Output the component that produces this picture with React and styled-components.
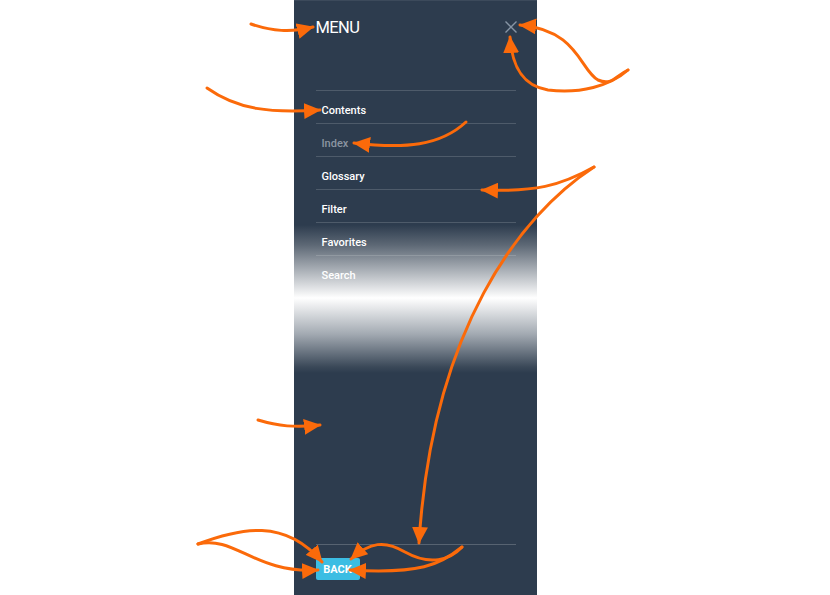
import styled, { createGlobalStyle } from 'styled-components'

const GlobalStyle = createGlobalStyle`
  html, body {
    margin: 0;
    padding: 0;
    background: #ffffff;
  }
  body {
    font-family: Roboto, "Open Sans", "Liberation Sans", sans-serif;
  }
`

const Page = styled.div`
  position: relative;
  width: 830px;
  height: 595px;
  overflow: hidden;
  display: flex;
  justify-content: center;
`

const Panel = styled.aside`
  width: 243px;
  height: 595px;
  box-sizing: border-box;
  padding: 0 21px 15px 22px;
  display: flex;
  flex-direction: column;
  border-top: 1px solid #3c4a5b;
  background: linear-gradient(
    to bottom,
    #2d3c4e 0,
    #2d3c4e 224px,
    #5d6875 244px,
    #ffffff 297px,
    #a3aab2 333px,
    #3a4858 366px,
    #2d3c4e 372px,
    #2d3c4e 100%
  );
`

const Header = styled.header`
  height: 89px;
  box-sizing: border-box;
  padding-top: 17px;
  display: flex;
  justify-content: space-between;
  align-items: flex-start;
`

const Title = styled.h1`
  margin: 0;
  font-size: 16.5px;
  line-height: 20px;
  font-weight: 400;
  color: #ffffff;
  letter-spacing: -0.6px;
`

const Close = styled.button`
  margin: 3px -1px 0 0;
  padding: 0;
  border: 0;
  background: none;
  width: 12px;
  height: 12px;
  display: flex;
`

const List = styled.ul`
  list-style: none;
  margin: 0;
  padding: 0;
`

const Item = styled.li`
  height: 33px;
  box-sizing: border-box;
  border-top: 1px solid rgba(255, 255, 255, 0.16);
  padding: 8px 0 0 6px;
  line-height: 24px;
  font-size: 11px;
  font-weight: 500;
  color: ${({ $dim }) => ($dim ? '#8b95a1' : '#ffffff')};
`

const Spacer = styled.div`
  flex: 1;
`

const Footer = styled.footer`
  border-top: 1px solid rgba(255, 255, 255, 0.2);
  padding-top: 13px;
`

const BackButton = styled.button`
  width: 44px;
  height: 22px;
  padding: 0;
  border: 0;
  border-radius: 2px;
  background: #3bbde3;
  color: #ffffff;
  font-family: Roboto, "Open Sans", "Liberation Sans", sans-serif;
  font-size: 11px;
  font-weight: 700;
`

const Overlay = styled.svg`
  position: absolute;
  left: 0;
  top: 0;
  pointer-events: none;
`

const items = [
  { label: 'Contents' },
  { label: 'Index', dim: true },
  { label: 'Glossary' },
  { label: 'Filter' },
  { label: 'Favorites' },
  { label: 'Search' },
]

// each path ends where its arrow tip sits
const arrows = [
  'M251,24 C272,31 290,33 313,27',
  'M207,88 C238,110 270,113 320,110',
  'M466,122 C440,146 405,149 354,143',
  'M594,167 C560,186 535,192 482,190',
  'M594,167 C520,215 432,330 419,543',
  'M258,420 C278,426 295,428 320,425',
  'M628,70 C615,76 612,86 598,80 C580,70 578,30 520,25',
  'M628,70 C610,86 580,94 548,90 C522,86 512,66 510,37',
  'M198,544 C240,528 285,518 322,562',
  'M198,544 C235,535 255,574 318,570',
  'M462,547 C450,560 430,566 405,552 C385,540 370,542 351,559',
  'M462,547 C440,565 420,574 350,570',
]

function Arrows() {
  return (
    <Overlay width="830" height="595" viewBox="0 0 830 595">
      <defs>
        <marker
          id="head"
          markerUnits="userSpaceOnUse"
          markerWidth="18"
          markerHeight="16"
          refX="16"
          refY="8"
          orient="auto"
        >
          <path d="M0,0 L17,8 L0,16 Z" fill="#fb6a0a" />
        </marker>
      </defs>
      {arrows.map((d, i) => (
        <path
          key={i}
          d={d}
          fill="none"
          stroke="#fb6a0a"
          strokeWidth="3"
          strokeLinecap="round"
          markerEnd="url(#head)"
        />
      ))}
    </Overlay>
  )
}

export default function App() {
  return (
    <Page>
      <GlobalStyle />
      <Panel>
        <Header>
          <Title>MENU</Title>
          <Close aria-label="Close">
            <svg width="12" height="12" viewBox="0 0 12 12">
              <path d="M0.5,0.5 L11.5,11.5 M11.5,0.5 L0.5,11.5" stroke="#8795a5" strokeWidth="1.4" />
            </svg>
          </Close>
        </Header>
        <List>
          {items.map((it) => (
            <Item key={it.label} $dim={it.dim}>
              {it.label}
            </Item>
          ))}
        </List>
        <Spacer />
        <Footer>
          <BackButton>BACK</BackButton>
        </Footer>
      </Panel>
      <Arrows />
    </Page>
  )
}
